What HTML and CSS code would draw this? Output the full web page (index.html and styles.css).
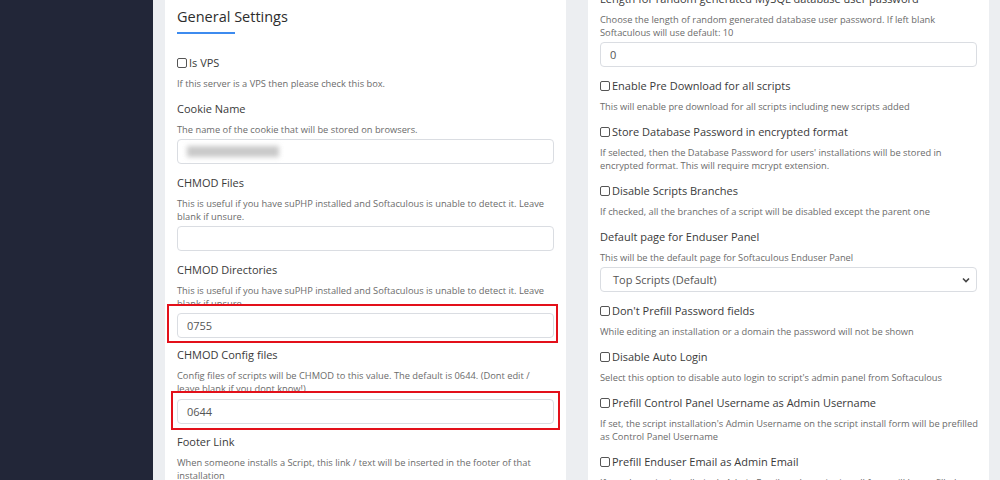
FILE: index.html
```html
<!DOCTYPE html>
<html lang="en">
<head>
    <meta charset="UTF-8">
    <meta name="viewport" content="width=device-width, initial-scale=1.0">
    <title>Softaculous Settings</title>
    <link rel="stylesheet" href="styles.css">
</head>
<body>
    <div class="layout">
        <aside class="sidebar"></aside>

        <main class="content">
            <section class="card">
                <h2 class="card-title">General Settings</h2>

                <div class="field">
                    <label class="check"><input type="checkbox">Is VPS</label>
                    <p class="help">If this server is a VPS then please check this box.</p>
                </div>

                <div class="field">
                    <label class="field-label" for="cookie">Cookie Name</label>
                    <p class="help">The name of the cookie that will be stored on browsers.</p>
                    <div class="input" id="cookie"><span class="blurred"></span></div>
                </div>

                <div class="field">
                    <label class="field-label">CHMOD Files</label>
                    <p class="help">This is useful if you have suPHP installed and Softaculous is unable to detect it. Leave blank if unsure.</p>
                    <div class="input"></div>
                </div>

                <div class="field">
                    <label class="field-label">CHMOD Directories</label>
                    <p class="help">This is useful if you have suPHP installed and Softaculous is unable to detect it. Leave blank if unsure.</p>
                    <div class="mark mark-dirs">
                        <div class="input">0755</div>
                    </div>
                </div>

                <div class="field">
                    <label class="field-label">CHMOD Config files</label>
                    <p class="help">Config files of scripts will be CHMOD to this value. The default is 0644. (Dont edit / leave blank if you dont know!)</p>
                    <div class="mark mark-config">
                        <div class="input">0644</div>
                    </div>
                </div>

                <div class="field">
                    <label class="field-label">Footer Link</label>
                    <p class="help">When someone installs a Script, this link / text will be inserted in the footer of that installation</p>
                </div>
            </section>

            <section class="card card-scrolled">
                <div class="field">
                    <label class="field-label">Length for random generated MySQL database user password</label>
                    <p class="help">Choose the length of random generated database user password. If left blank Softaculous will use default: 10</p>
                    <div class="input">0</div>
                </div>

                <div class="field">
                    <label class="check"><input type="checkbox">Enable Pre Download for all scripts</label>
                    <p class="help">This will enable pre download for all scripts including new scripts added</p>
                </div>

                <div class="field">
                    <label class="check"><input type="checkbox">Store Database Password in encrypted format</label>
                    <p class="help">If selected, then the Database Password for users' installations will be stored in encrypted format. This will require mcrypt extension.</p>
                </div>

                <div class="field">
                    <label class="check"><input type="checkbox">Disable Scripts Branches</label>
                    <p class="help">If checked, all the branches of a script will be disabled except the parent one</p>
                </div>

                <div class="field">
                    <label class="field-label">Default page for Enduser Panel</label>
                    <p class="help">This will be the default page for Softaculous Enduser Panel</p>
                    <div class="input select">
                        <span>Top Scripts (Default)</span>
                        <svg width="8" height="6" viewBox="0 0 8 6"><path d="M1 1.5 L4 4.5 L7 1.5" fill="none" stroke="#444" stroke-width="1.6"/></svg>
                    </div>
                </div>

                <div class="field">
                    <label class="check"><input type="checkbox">Don't Prefill Password fields</label>
                    <p class="help">While editing an installation or a domain the password will not be shown</p>
                </div>

                <div class="field">
                    <label class="check"><input type="checkbox">Disable Auto Login</label>
                    <p class="help">Select this option to disable auto login to script's admin panel from Softaculous</p>
                </div>

                <div class="field">
                    <label class="check"><input type="checkbox">Prefill Control Panel Username as Admin Username</label>
                    <p class="help">If set, the script installation's Admin Username on the script install form will be prefilled as Control Panel Username</p>
                </div>

                <div class="field">
                    <label class="check"><input type="checkbox">Prefill Enduser Email as Admin Email</label>
                    <p class="help">If set, the script installation's Admin Email on the script install form will be prefilled as Enduser Email</p>
                </div>
            </section>
        </main>
    </div>
</body>
</html>
```

FILE: styles.css
```css
body {
    margin: 0;
    height: 480px;
    overflow: hidden;
    font-family: "Open Sans", "Liberation Sans", sans-serif;
    color: #333;
}
.layout {
    display: flex;
    height: 480px;
}
.sidebar {
    width: 153px;
    flex-shrink: 0;
    background: #222638;
}
.content {
    flex: 1;
    display: flex;
    gap: 22px;
    padding: 0 11px 0 12px;
    background: #eceef1;
}
.card {
    width: 401px;
    flex-shrink: 0;
    background: #fff;
    padding: 7px 12px 0;
    box-sizing: border-box;
}
.card-scrolled {
    padding-top: 0;
}
.card-scrolled .field:first-child {
    margin-top: -9px;
}
.card-scrolled .help {
    margin-right: -6px;
}
.card-title {
    margin: 0 0 21px;
    font-size: 14.5px;
    line-height: 20px;
    font-weight: 400;
    color: #2d2d2d;
}
.card-title::after {
    content: "";
    display: block;
    width: 58px;
    height: 2px;
    margin-top: 5px;
    background: #3d8bef;
}
.field {
    margin-bottom: 11px;
}
.field-label,
.check {
    display: block;
    font-size: 11px;
    line-height: 16px;
    color: #3a3a3a;
    margin-bottom: 6px;
    white-space: nowrap;
}
.check input {
    appearance: none;
    width: 10px;
    height: 10px;
    margin: 0 2px 0 0;
    border: 1px solid #555;
    border-radius: 2px;
    vertical-align: -1px;
    box-sizing: border-box;
}
.help {
    margin: 0;
    font-size: 9.3px;
    line-height: 13px;
    color: #6b6b6b;
}
.input {
    margin-top: 3px;
    height: 25px;
    box-sizing: border-box;
    border: 1px solid #dadde2;
    border-radius: 4px;
    padding: 0 9px;
    font-size: 11px;
    line-height: 23px;
    color: #555;
}
.blurred {
    display: inline-block;
    width: 92px;
    height: 11px;
    margin-top: 6px;
    vertical-align: top;
    background: #c9c9c9;
    filter: blur(2.5px);
}
.select {
    display: flex;
    justify-content: space-between;
    align-items: center;
    padding: 0 6px 0 12px;
}
.mark {
    position: relative;
    background: #fff;
    border: 2px solid #e3101a;
}
.mark .input {
    margin-top: 0;
}
.mark-dirs {
    margin: -6px -4px 0 -10px;
    padding: 7px 2px 3px 8px;
}
.mark-config {
    margin: -4px -6px 0 -6px;
    padding: 6px 4px 4px 4px;
}
.field:has(.mark) {
    margin-bottom: 4px;
}
```
